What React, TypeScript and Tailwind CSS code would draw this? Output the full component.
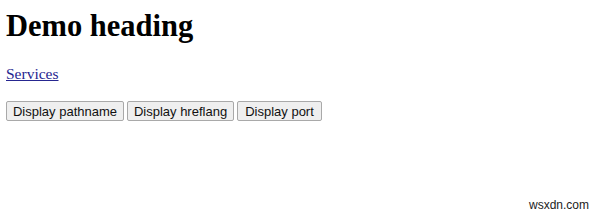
import React from 'react';

const buttons = [
  { label: 'Display pathname', w: 'w-[118px]' },
  { label: 'Display hreflang', w: 'w-[107px]' },
  { label: 'Display port', w: 'w-[85px]' },
];

const App = () => {
  return (
    <div className="relative w-[600px] h-[216px] bg-white overflow-hidden px-[6px] pt-[8px] font-['Liberation_Serif',serif] text-black">
      <h1 className="text-[30.5px] leading-[36px] font-bold">Demo heading</h1>

      <a href="#" className="block mt-[21px] text-[15.5px] leading-[18px] text-[#262690] underline underline-offset-1">
        Services
      </a>

      <div className="flex gap-[3px] mt-[18px]">
        {buttons.map(b => (
          <button
            key={b.label}
            className={`${b.w} h-[20px] px-0 bg-[#efefef] border border-[#a9a9a9] rounded-[2px] text-[13px] leading-none text-[#111] font-['Liberation_Sans',Arial,sans-serif]`}
          >
            {b.label}
          </button>
        ))}
      </div>

      <span className="absolute right-[11px] bottom-[4px] text-[12px] leading-[14px] text-[#222] font-['Liberation_Sans',Arial,sans-serif]">
        wsxdn.com
      </span>
    </div>
  );
};

export default App;
